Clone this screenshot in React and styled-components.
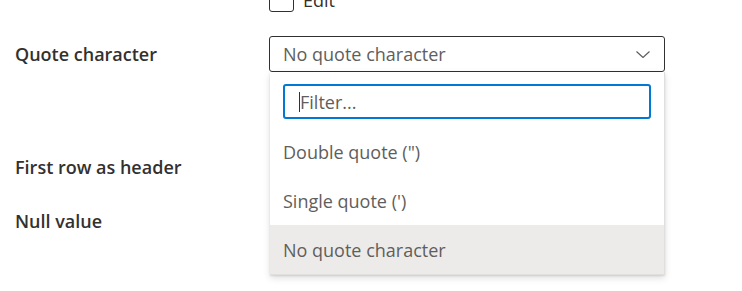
import React from "react";
import styled, { createGlobalStyle } from "styled-components";

const GlobalStyle = createGlobalStyle`
  html, body {
    margin: 0;
    padding: 0;
    background: #fff;
    overflow: hidden;
  }
  body {
    font-family: "Open Sans", "Noto Sans", sans-serif;
    color: #323130;
  }
`;

const options = ['Double quote (")', "Single quote (')", "No quote character"];

const App = () => {
  const selected = "No quote character";
  return (
    <Page>
      <GlobalStyle />
      <Form>
        <Row height={24}>
          <Label />
          <CheckField>
            <Box />
            <CheckText>Edit</CheckText>
          </CheckField>
        </Row>
        <Row height={36} top={24}>
          <Label>Quote character</Label>
          <SelectWrap>
            <Select>
              <SelectText>{selected}</SelectText>
              <Chevron viewBox="0 0 14 7">
                <path d="M0.5 0.5 L7 6.5 L13.5 0.5" />
              </Chevron>
            </Select>
            <Menu>
              <FilterArea>
                <FilterBox>
                  <Caret />
                  <FilterInput placeholder="Filter..." />
                </FilterBox>
              </FilterArea>
              {options.map((o) => (
                <Option key={o} active={o === selected}>
                  {o}
                </Option>
              ))}
            </Menu>
          </SelectWrap>
        </Row>
        <Row height={32} top={79}>
          <Label>First row as header</Label>
          <div />
        </Row>
        <Row height={32} top={22}>
          <Label>Null value</Label>
          <div />
        </Row>
      </Form>
    </Page>
  );
};

const Page = styled.div`
  width: 742px;
  height: 291px;
  overflow: hidden;
`;

const Form = styled.div`
  margin-top: -12px;
  padding-left: 15px;
  display: flex;
  flex-direction: column;
`;

const Row = styled.div`
  display: grid;
  grid-template-columns: 254px 396px;
  align-items: center;
  height: ${(p) => p.height}px;
  margin-top: ${(p) => p.top || 0}px;
`;

const Label = styled.div`
  font-size: 18px;
  font-weight: 600;
  color: #323130;
  white-space: nowrap;
`;

const CheckField = styled.div`
  display: flex;
  align-items: center;
  gap: 9px;
`;

const Box = styled.div`
  width: 25px;
  height: 24px;
  box-sizing: border-box;
  border: 1px solid #323130;
  border-radius: 3px;
`;

const CheckText = styled.span`
  font-size: 18px;
  color: #323130;
`;

const SelectWrap = styled.div`
  position: relative;
  height: 36px;
`;

const Select = styled.div`
  box-sizing: border-box;
  height: 36px;
  border: 1px solid #323130;
  border-radius: 3px;
  display: flex;
  align-items: center;
  justify-content: space-between;
  padding: 0 14px 0 13px;
`;

const SelectText = styled.span`
  font-size: 18px;
  color: #605e5c;
`;

const Chevron = styled.svg`
  width: 14px;
  height: 7px;
  fill: none;
  stroke: #605e5c;
  stroke-width: 1.2;
`;

const Menu = styled.div`
  position: absolute;
  top: 36px;
  left: 1px;
  width: 395px;
  box-sizing: border-box;
  background: #fff;
  border-right: 1px solid #e1dfdd;
  border-bottom: 1px solid #e1dfdd;
  box-shadow: 0 3.2px 7.2px rgba(0, 0, 0, 0.13), 0 0.6px 1.8px rgba(0, 0, 0, 0.11);
  display: flex;
  flex-direction: column;
`;

const FilterArea = styled.div`
  padding: 12px 13px 8px 13px;
`;

const FilterBox = styled.div`
  position: relative;
  height: 35px;
  box-sizing: border-box;
  border: 2px solid #0078d4;
  border-radius: 3px;
  display: flex;
  align-items: center;
  padding-left: 15px;
`;

const Caret = styled.span`
  position: absolute;
  left: 14px;
  top: 6px;
  width: 1px;
  height: 20px;
  background: #323130;
`;

const FilterInput = styled.input`
  border: none;
  outline: none;
  width: 100%;
  font-family: inherit;
  font-size: 18px;
  color: #323130;
  background: transparent;
  padding: 0;
  &::placeholder {
    color: #605e5c;
  }
`;

const Option = styled.div`
  height: 49px;
  display: flex;
  align-items: center;
  padding-left: 13px;
  font-size: 18px;
  color: #605e5c;
  background: ${(p) => (p.active ? "#edebe9" : "transparent")};
`;

export default App;
